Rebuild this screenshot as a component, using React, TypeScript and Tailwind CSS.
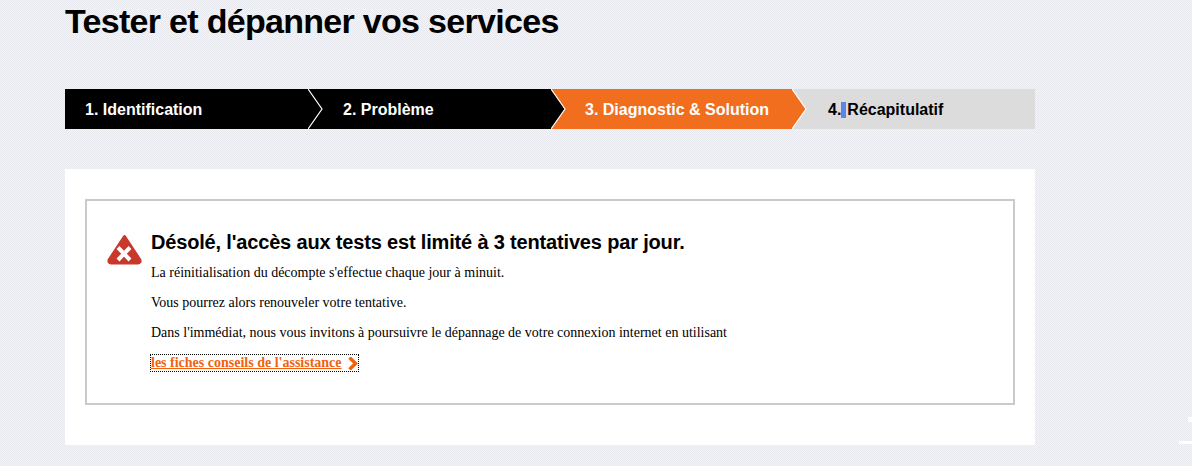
const steps = [
  { label: '1. Identification', width: 'w-[243px] pl-5', tone: 'bg-black text-white', chevron: '#000000' },
  { label: '2. Problème', width: 'w-[243px] pl-[35px]', tone: 'bg-black text-white', chevron: '#000000' },
  { label: '3. Diagnostic & Solution', width: 'w-[241px] pl-[34px]', tone: 'bg-[#f16e1e] text-white', chevron: '#f16e1e' },
];

function Chevron({ fill }: { fill: string }) {
  return (
    <svg className="absolute top-0 left-full z-10" width="15" height="40" viewBox="0 0 15 40">
      <path d="M0 0 L14 20 L0 40 Z" fill={fill} />
      <path d="M0 0 L14 20 L0 40" fill="none" stroke="#ffffff" strokeWidth="1.2" />
    </svg>
  );
}

function AlertIcon() {
  return (
    <svg width="35" height="31" viewBox="0 0 35 31" className="shrink-0">
      <path d="M17.500 2.500 L33 26 Q33.500 29 31 29 L4 29 Q1.500 29 2 26 Z" fill="#c8392b" stroke="#c8392b" strokeWidth="3" strokeLinejoin="round" />
      <path d="M11 13.500 L23 26 M23 13.500 L11 26" stroke="#ffffff" strokeWidth="4" />
    </svg>
  );
}

export default function App() {
  return (
    <div className="relative h-[466px] w-[1192px] overflow-hidden bg-[image:repeating-conic-gradient(#f7f3f5_0_25%,#e7e9ee_0_50%)] bg-[size:2px_2px] pl-[65px] font-['Liberation_Sans',Arial,sans-serif] text-black">
      <h1 className="h-[89px] pt-[1px] text-[34px] leading-[40px] font-bold tracking-[-0.7px]">Tester et dépanner vos services</h1>

      <ol className="flex h-10 w-[970px] text-[16px] font-bold">
        {steps.map((step) => (
          <li key={step.label} className={`relative flex items-center pt-[1px] ${step.width} ${step.tone}`}>
            {step.label}
            <Chevron fill={step.chevron} />
          </li>
        ))}
        <li className="flex flex-1 items-center bg-[#dcdcdc] pt-[1px] pl-[36px]">
          4.<span className="inline-block h-4 w-[5px] bg-[#5b85e6]" />
          <span className="ml-[1px]">Récapitulatif</span>
        </li>
      </ol>

      <section className="mt-10 h-[276px] w-[970px] bg-white px-5 pt-[30px]">
        <div className="flex h-[206px] border-2 border-[#c9c9cf] pt-[29px] pl-5">
          <div className="pt-1">
            <AlertIcon />
          </div>
          <div className="ml-[9px] font-['Liberation_Serif','Times_New_Roman',serif] text-[14px] leading-[16px]">
            <h2 className="mb-[11px] font-['Liberation_Sans',Arial,sans-serif] text-[20px] leading-[24px] font-bold tracking-[-0.17px]">
              Désolé, l'accès aux tests est limité à 3 tentatives par jour.
            </h2>
            <p className="mb-[14px]">La réinitialisation du décompte s'effectue chaque jour à minuit.</p>
            <p className="mb-[14px]">Vous pourrez alors renouveler votre tentative.</p>
            <p className="mb-[14px]">Dans l'immédiat, nous vous invitons à poursuivre le dépannage de votre connexion internet en utilisant</p>
            <a href="#" className="inline-flex items-center font-bold text-[#f0620f] underline outline-1 outline-black outline-dotted">
              les fiches conseils de l'assistance
              <svg className="ml-[6px]" width="10" height="13" viewBox="0 0 10 13">
                <path d="M1.500 0.500 L7.500 6.500 L1.500 12.500" fill="none" stroke="#f0620f" strokeWidth="3.400" />
              </svg>
            </a>
          </div>
        </div>
      </section>

      <div className="absolute top-[417px] right-0 h-[5px] w-1 bg-white" />
      <div className="absolute top-[441px] right-0 h-[3px] w-[13px] bg-white" />
    </div>
  );
}
